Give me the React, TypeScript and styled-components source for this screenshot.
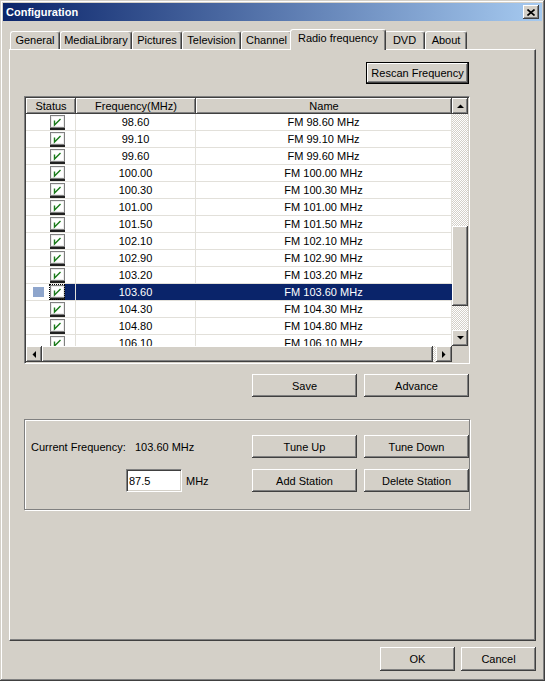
import React from "react"
import styled, { createGlobalStyle, css } from "styled-components"

const GlobalStyle = createGlobalStyle`
  html, body { margin: 0; padding: 0; background: #d4d0c8; }
  body { font-family: "Liberation Sans", Arial, sans-serif; font-size: 11px; color: #000; }
  * { box-sizing: border-box; }
`

const raised = css`
  box-shadow: inset -1px -1px #404040, inset 1px 1px #fff, inset -2px -2px #808080, inset 2px 2px #d4d0c8;
`

const sunken = css`
  border: 1px solid;
  border-color: #808080 #fff #fff #808080;
  box-shadow: inset 1px 1px #404040, inset -1px -1px #d4d0c8;
`

const Window = styled.div`
  width: 545px;
  height: 681px;
  display: flex;
  flex-direction: column;
  padding: 2px;
  background: #d4d0c8;
  box-shadow: inset -1px -1px #404040, inset 1px 1px #d4d0c8, inset -2px -2px #808080, inset 2px 2px #fff;
`

const TitleBar = styled.div`
  height: 18px;
  margin: 1px 1px 0;
  padding: 0 3px 0 3px;
  display: flex;
  align-items: center;
  background: linear-gradient(to right, #0a246a, #a6caf0);
  color: #fff;
  font-weight: bold;
  font-size: 11px;
`

const CloseButton = styled.div`
  width: 16px;
  height: 14px;
  margin-left: auto;
  display: flex;
  align-items: center;
  justify-content: center;
  background: #d4d0c8;
  ${raised}
`

const TabStrip = styled.div`
  height: 20px;
  margin-top: 8px;
  padding-left: 8px;
  display: flex;
  align-items: flex-end;
`

const Tab = styled.div<{ $w: number; $active?: boolean }>`
  width: ${p => p.$w}px;
  height: 18px;
  padding-bottom: 1px;
  display: flex;
  align-items: center;
  justify-content: center;
  background: #d4d0c8;
  border-top: 1px solid #fff;
  border-left: 1px solid #fff;
  border-right: 1px solid #404040;
  border-radius: 3px 3px 0 0;
  box-shadow: inset -1px 0 #808080;
  white-space: nowrap;
  ${p =>
    p.$active &&
    css`
      width: ${p.$w + 4}px;
      height: 21px;
      margin: 0 -2px -1px;
      padding-bottom: 4px;
      position: relative;
      z-index: 1;
    `}
`

const Panel = styled.div`
  flex: 1;
  margin: 0 7px;
  padding: 12px 0 0 14px;
  display: flex;
  flex-direction: column;
  border-top: 1px solid #fff;
  border-left: 1px solid #fff;
  border-right: 1px solid #404040;
  border-bottom: 1px solid #404040;
  box-shadow: inset -1px -1px #808080;
`

const Column = styled.div`
  width: 446px;
  display: flex;
  flex-direction: column;
`

const ButtonRow = styled.div<{ $top: number }>`
  margin-top: ${p => p.$top}px;
  padding-right: 1px;
  display: flex;
  justify-content: flex-end;
  gap: 7px;
`

const Button = styled.button<{ $w?: number; $h?: number; $default?: boolean }>`
  width: ${p => p.$w ?? 105}px;
  height: ${p => p.$h ?? 23}px;
  padding: 0;
  font: inherit;
  color: #000;
  background: #d4d0c8;
  border: none;
  ${raised}
  ${p =>
    p.$default &&
    css`
      border: 1px solid #000;
    `}
`

const List = styled.div`
  margin-top: 12px;
  height: 268px;
  padding: 1px;
  display: grid;
  grid-template-columns: 426px 16px;
  grid-template-rows: 248px 16px;
  ${sunken}
`

const Viewport = styled.div`
  overflow: hidden;
  background: #fff;
`

const cols = "50px 120px 256px"

const HeaderRow = styled.div`
  height: 16px;
  display: grid;
  grid-template-columns: ${cols};
  background: #d4d0c8;
`

const HeaderCell = styled.div`
  display: flex;
  align-items: center;
  justify-content: center;
  ${raised}
`

const Row = styled.div`
  height: 17px;
  display: grid;
  grid-template-columns: ${cols};
  border-bottom: 1px solid #e2e0da;
`

const Cell = styled.div<{ $sel?: boolean }>`
  display: flex;
  align-items: center;
  justify-content: center;
  border-right: 1px solid ${p => (p.$sel ? "#0a246a" : "#e2e0da")};
  background: ${p => (p.$sel ? "#0a246a" : "transparent")};
  color: ${p => (p.$sel ? "#fff" : "#000")};
`

const StatusCell = styled.div`
  display: flex;
  align-items: center;
  padding-left: 7px;
  border-right: 1px solid #e2e0da;
`

const Marker = styled.div<{ $on?: boolean }>`
  width: 11px;
  height: 10px;
  margin-right: 5px;
  background: ${p => (p.$on ? "#8ea5cc" : "transparent")};
`

const CheckWrap = styled.div<{ $focus?: boolean }>`
  width: 16px;
  height: 16px;
  display: flex;
  align-items: center;
  justify-content: center;
  outline: ${p => (p.$focus ? "1px dotted #000" : "none")};
  outline-offset: -1px;
`

const Fill = styled.div<{ $sel?: boolean }>`
  flex: 1;
  align-self: stretch;
  background: ${p => (p.$sel ? "#0a246a" : "transparent")};
`

const VScroll = styled.div`
  display: flex;
  flex-direction: column;
`

const HScroll = styled.div`
  display: flex;
`

const Track = styled.div<{ $size?: number }>`
  flex: ${p => (p.$size ? `0 0 ${p.$size}px` : "1")};
  background-color: #fff;
  background-image: conic-gradient(#d4d0c8 25%, #fff 0 50%, #d4d0c8 0 75%, #fff 0);
  background-size: 2px 2px;
`

const Thumb = styled.div<{ $size: number }>`
  flex: 0 0 ${p => p.$size}px;
  background: #d4d0c8;
  ${raised}
`

const ScrollButton = styled.div`
  width: 16px;
  height: 16px;
  flex: 0 0 16px;
  display: flex;
  align-items: center;
  justify-content: center;
  background: #d4d0c8;
  ${raised}
`

const Corner = styled.div`
  background: #d4d0c8;
`

const GroupBox = styled.div`
  margin-top: 22px;
  height: 91px;
  padding: 15px 0 0 6px;
  display: grid;
  grid-template-columns: 1fr 105px 105px;
  grid-template-rows: 23px 23px;
  row-gap: 11px;
  column-gap: 7px;
  border: 1px solid #808080;
  box-shadow: inset 1px 1px #fff, 1px 1px #fff;
`

const Line = styled.div<{ $indent?: number }>`
  display: flex;
  align-items: center;
  padding-left: ${p => p.$indent ?? 0}px;
`

const Label = styled.span<{ $w?: number }>`
  width: ${p => (p.$w ? `${p.$w}px` : "auto")};
  margin-left: ${p => (p.$w ? 0 : 4)}px;
`

const TextBox = styled.input`
  width: 56px;
  height: 23px;
  padding: 0 2px;
  font: inherit;
  background: #fff;
  outline: none;
  ${sunken}
`

const Footer = styled.div`
  height: 38px;
  padding: 6px 7px 0 0;
  display: flex;
  justify-content: flex-end;
  align-items: flex-start;
  gap: 6px;
`

const tabs = [
  { label: "General", w: 50 },
  { label: "MediaLibrary", w: 72 },
  { label: "Pictures", w: 50 },
  { label: "Television", w: 59 },
  { label: "Channel", w: 51 },
  { label: "Radio frequency", w: 92, active: true },
  { label: "DVD", w: 41 },
  { label: "About", w: 42 },
]

const freqs = [
  "98.60", "99.10", "99.60", "100.00", "100.30", "101.00", "101.50",
  "102.10", "102.90", "103.20", "103.60", "104.30", "104.80", "106.10",
]
const selected = "103.60"

const Arrow = ({ dir }: { dir: "up" | "down" | "left" | "right" }) => {
  const pts = {
    up: "0,4 7,4 3.5,0.5",
    down: "0,0 7,0 3.5,3.5",
    left: "4,0 4,7 0.5,3.5",
    right: "0,0 0,7 3.5,3.5",
  }[dir]
  const vertical = dir === "up" || dir === "down"
  return (
    <svg width={vertical ? 7 : 4} height={vertical ? 4 : 7} viewBox={vertical ? "0 0 7 4" : "0 0 4 7"}>
      <polygon points={pts} fill="#000" />
    </svg>
  )
}

const CheckIcon = () => (
  <svg width="15" height="15" viewBox="0 0 15 15">
    <rect x="0" y="0" width="15" height="15" fill="#202020" />
    <rect x="0" y="0" width="15" height="13" fill="#808080" />
    <rect x="1" y="1" width="13" height="11" fill="#ececec" />
    <rect x="2" y="2" width="11" height="9" fill="#fff" />
    <path d="M4.5 5.5 V10 L10.5 4" stroke="#1a7a1a" strokeWidth="1.4" fill="none" />
  </svg>
)

export default function App() {
  return (
    <>
      <GlobalStyle />
      <Window>
        <TitleBar>
          Configuration
          <CloseButton>
            <svg width="8" height="7" viewBox="0 0 8 7">
              <path d="M0.5 0.5 L7.5 6.5 M7.5 0.5 L0.5 6.5" stroke="#000" strokeWidth="1.6" />
            </svg>
          </CloseButton>
        </TitleBar>

        <TabStrip>
          {tabs.map(t => (
            <Tab key={t.label} $w={t.w} $active={t.active}>
              {t.label}
            </Tab>
          ))}
        </TabStrip>

        <Panel>
          <Column>
            <ButtonRow $top={0}>
              <Button $w={103} $h={22} $default>
                Rescan Frequency
              </Button>
            </ButtonRow>

            <List>
              <Viewport>
                <HeaderRow>
                  <HeaderCell>Status</HeaderCell>
                  <HeaderCell>Frequency(MHz)</HeaderCell>
                  <HeaderCell>Name</HeaderCell>
                </HeaderRow>
                {freqs.map(f => {
                  const sel = f === selected
                  return (
                    <Row key={f}>
                      <StatusCell>
                        <Marker $on={sel} />
                        <CheckWrap $focus={sel}>
                          <CheckIcon />
                        </CheckWrap>
                        <Fill $sel={sel} />
                      </StatusCell>
                      <Cell $sel={sel}>{f}</Cell>
                      <Cell $sel={sel}>FM {f} MHz</Cell>
                    </Row>
                  )
                })}
              </Viewport>
              <VScroll>
                <ScrollButton>
                  <Arrow dir="up" />
                </ScrollButton>
                <Track $size={112} />
                <Thumb $size={80} />
                <Track />
                <ScrollButton>
                  <Arrow dir="down" />
                </ScrollButton>
              </VScroll>
              <HScroll>
                <ScrollButton>
                  <Arrow dir="left" />
                </ScrollButton>
                <Thumb $size={391} />
                <Track />
                <ScrollButton>
                  <Arrow dir="right" />
                </ScrollButton>
              </HScroll>
              <Corner />
            </List>

            <ButtonRow $top={10}>
              <Button>Save</Button>
              <Button>Advance</Button>
            </ButtonRow>

            <GroupBox>
              <Line>
                <Label $w={104}>Current Frequency:</Label>
                <span>103.60 MHz</span>
              </Line>
              <Button>Tune Up</Button>
              <Button>Tune Down</Button>
              <Line $indent={95}>
                <TextBox defaultValue="87.5" />
                <Label>MHz</Label>
              </Line>
              <Button>Add Station</Button>
              <Button>Delete Station</Button>
            </GroupBox>
          </Column>
        </Panel>

        <Footer>
          <Button $w={75} $h={24}>
            OK
          </Button>
          <Button $w={75} $h={24}>
            Cancel
          </Button>
        </Footer>
      </Window>
    </>
  )
}
